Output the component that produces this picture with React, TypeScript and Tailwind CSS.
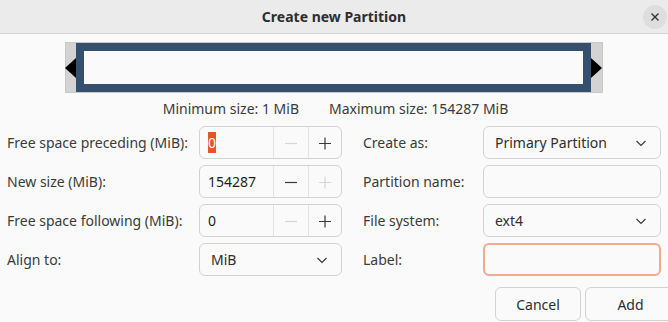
import React from "react";

const font = { fontFamily: '"Noto Sans", "DejaVu Sans", sans-serif' };

function Minus({ disabled }: { disabled?: boolean }) {
  return (
    <svg width="14" height="14" viewBox="0 0 14 14">
      <path d="M1 7.5h12" stroke={disabled ? "#d6d6d6" : "#3a3a3a"} strokeWidth="1.2" />
    </svg>
  );
}
function Plus({ disabled }: { disabled?: boolean }) {
  return (
    <svg width="14" height="14" viewBox="0 0 14 14">
      <path d="M1 7.5h12M7 1.5v12" stroke={disabled ? "#d6d6d6" : "#3a3a3a"} strokeWidth="1.2" />
    </svg>
  );
}
function Chevron() {
  return (
    <svg width="12" height="8" viewBox="0 0 12 8">
      <path d="M1.5 2l4.5 4.5L10.5 2" stroke="#3a3a3a" strokeWidth="1.2" fill="none" />
    </svg>
  );
}

function Spin({ value, minusOff, plusOff, selected }: { value: string; minusOff?: boolean; plusOff?: boolean; selected?: boolean }) {
  return (
    <div className="flex h-[33px] rounded-[6px] border border-[#d2d2d2] bg-[#fafafa]">
      <div className="flex w-[73px] items-center pl-[8px] text-[14px] text-[#1e1e1e]">
        {selected ? <span className="bg-[#e95420] text-white px-[0px]">{value}</span> : value}
      </div>
      <div className="flex w-[35px] items-center justify-center border-l border-[#e2e2e2]">
        <Minus disabled={minusOff} />
      </div>
      <div className="flex flex-1 items-center justify-center border-l border-[#e2e2e2]">
        <Plus disabled={plusOff} />
      </div>
    </div>
  );
}

function Combo({ value }: { value: string }) {
  return (
    <div className="flex h-[33px] items-center justify-between rounded-[6px] border border-[#d2d2d2] bg-[#fafafa] pl-[11px] pr-[13px] text-[14px] text-[#2e2e2e]">
      <span>{value}</span>
      <Chevron />
    </div>
  );
}

function Entry({ focus }: { focus?: boolean }) {
  return focus ? (
    <div className="h-[33px] rounded-[6px] border-2 border-[#f3a88f] bg-[#fafafa]" />
  ) : (
    <div className="h-[33px] rounded-[6px] border border-[#d2d2d2] bg-[#fafafa]" />
  );
}

function Label({ children }: { children: React.ReactNode }) {
  return <div className="flex h-[33px] items-center text-[14px] text-[#3b3b3b]">{children}</div>;
}

export default function App() {
  return (
    <div className="h-[322px] w-[668px] overflow-hidden bg-[#fafafa]" style={font}>
      <div className="grid h-[34px] grid-cols-[48px_1fr_48px] items-center border-b border-[#d4d4d4] bg-[#ebebeb]">
        <div />
        <div className="text-center text-[14px] font-bold text-[#2e2e2e]">Create new Partition</div>
        <div className="flex justify-end pr-[1px]">
          <div className="flex h-[24px] w-[24px] items-center justify-center rounded-full bg-[#dedede]">
            <svg width="10" height="10" viewBox="0 0 10 10">
              <path d="M1.5 1.5l7 7M8.5 1.5l-7 7" stroke="#333" strokeWidth="1.4" />
            </svg>
          </div>
        </div>
      </div>

      <div className="ml-[65px] mt-[8px] flex h-[51px] w-[538px] items-center border border-[#c8c8c8] bg-[#d3d3d3]">
        <svg width="11" height="20" viewBox="0 0 11 20" className="-ml-[1px]">
          <path d="M0 10L11 0v20z" fill="#000" />
        </svg>
        <div className="flex h-[49px] flex-1 items-center border-[8px] border-[#34506e] bg-[#fafafa]" />
        <svg width="11" height="20" viewBox="0 0 11 20">
          <path d="M11 10L0 0v20z" fill="#000" />
        </svg>
      </div>

      <div className="mt-[5px] flex justify-center gap-[30px] pl-[3px] text-[14px] text-[#3b3b3b]">
        <span>Minimum size: 1 MiB</span>
        <span>Maximum size: 154287 MiB</span>
      </div>

      <div className="mt-[7px] grid grid-cols-[192px_143px_21px_120px_178px] gap-y-[6px] pl-[7px]">
        <Label>Free space preceding (MiB):</Label>
        <Spin value="0" minusOff selected />
        <div />
        <Label>Create as:</Label>
        <Combo value="Primary Partition" />

        <Label>New size (MiB):</Label>
        <Spin value="154287" plusOff />
        <div />
        <Label>Partition name:</Label>
        <Entry />

        <Label>Free space following (MiB):</Label>
        <Spin value="0" minusOff />
        <div />
        <Label>File system:</Label>
        <Combo value="ext4" />

        <Label>Align to:</Label>
        <Combo value="MiB" />
        <div />
        <Label>Label:</Label>
        <Entry focus />
      </div>

      <div className="mt-[11px] flex justify-end gap-[4px] pr-0" style={{ marginRight: -8 }}>
        <div className="flex h-[34px] w-[86px] items-center justify-center rounded-[6px] border border-[#d2d2d2] bg-[#fafafa] text-[14px] text-[#2e2e2e]">
          Cancel
        </div>
        <div className="flex h-[34px] w-[91px] items-center justify-center rounded-[6px] border border-[#d2d2d2] bg-[#fafafa] text-[14px] text-[#2e2e2e]">
          Add
        </div>
      </div>
    </div>
  );
}
